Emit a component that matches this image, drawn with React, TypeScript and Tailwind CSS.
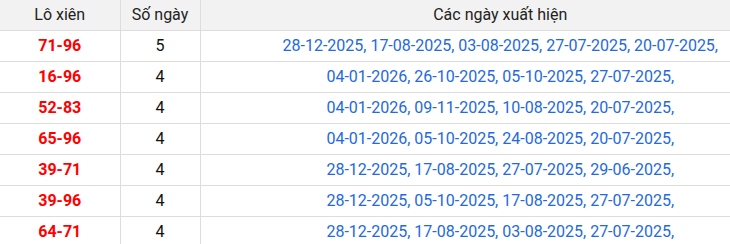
import React from "react";

const rows = [
  { pair: "71-96", count: 5, dates: "28-12-2025, 17-08-2025, 03-08-2025, 27-07-2025, 20-07-2025," },
  { pair: "16-96", count: 4, dates: "04-01-2026, 26-10-2025, 05-10-2025, 27-07-2025," },
  { pair: "52-83", count: 4, dates: "04-01-2026, 09-11-2025, 10-08-2025, 20-07-2025," },
  { pair: "65-96", count: 4, dates: "04-01-2026, 05-10-2025, 24-08-2025, 20-07-2025," },
  { pair: "39-71", count: 4, dates: "28-12-2025, 17-08-2025, 27-07-2025, 29-06-2025," },
  { pair: "39-96", count: 4, dates: "28-12-2025, 05-10-2025, 17-08-2025, 27-07-2025," },
  { pair: "64-71", count: 4, dates: "28-12-2025, 17-08-2025, 03-08-2025, 27-07-2025," },
];

export default function App() {
  return (
    <div className="w-[730px] h-[244px] overflow-hidden bg-white font-['Roboto',sans-serif] text-[16px]">
      <table className="w-[800px] border-collapse table-fixed">
        <colgroup>
          <col className="w-[120px]" />
          <col className="w-[80px]" />
          <col />
        </colgroup>
        <thead>
          <tr className="h-[30px] bg-[#f2f2f2] text-[#222]">
            <th className="font-normal border-r border-b border-[#dddddd] text-center">Lô xiên</th>
            <th className="font-normal border-r border-b border-[#dddddd] text-center">Số ngày</th>
            <th className="font-normal border-b border-[#dddddd] text-center">Các ngày xuất hiện</th>
          </tr>
        </thead>
        <tbody>
          {rows.map((r) => (
            <tr key={r.pair} className="h-[31px]">
              <td className="border-r border-b border-[#dddddd] text-center font-bold text-[#ff0000]">{r.pair}</td>
              <td className="border-r border-b border-[#dddddd] text-center text-[#111]">{r.count}</td>
              <td className="border-b border-[#dddddd] text-center text-[#2469e0] whitespace-nowrap">{r.dates}</td>
            </tr>
          ))}
        </tbody>
      </table>
    </div>
  );
}
